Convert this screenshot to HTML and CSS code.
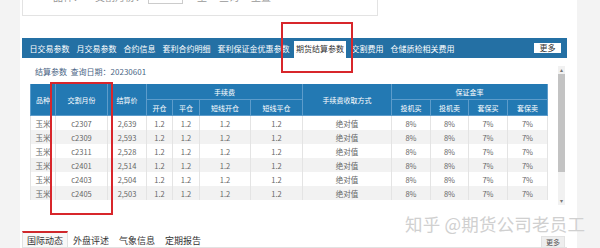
FILE: index.html
```html
<!DOCTYPE html>
<html lang="zh-CN">
<head>
    <meta charset="UTF-8">
    <title>期货结算参数</title>
    <link rel="stylesheet" href="styles.css">
</head>
<body>
    <div class="panel">
        <div class="filter">
            <div class="filter-row">
                <span class="f-label">品种：</span>
                <span class="f-label wide">交割月份：</span>
                <span class="f-input"></span>
                <span class="f-label short">至</span>
                <span class="f-label">查询</span>
                <span class="f-label">重置</span>
            </div>
        </div>

        <nav class="tabs">
            <a class="tab">日交易参数</a>
            <a class="tab">月交易参数</a>
            <a class="tab">合约信息</a>
            <a class="tab">套利合约明细</a>
            <a class="tab">套利保证金优惠参数</a>
            <a class="tab active">期货结算参数</a>
            <a class="tab">交割费用</a>
            <a class="tab">仓储质检相关费用</a>
            <span class="more">更多</span>
        </nav>

        <div class="scroll-area">
            <div class="scroll-content">
                <div class="caption">结算参数&nbsp;&nbsp;查询日期：20230601</div>
                <table class="params">
                    <colgroup>
                        <col style="width:25px"><col style="width:52px"><col style="width:39px">
                        <col style="width:26px"><col style="width:27px"><col style="width:51px"><col style="width:52px">
                        <col style="width:89px">
                        <col style="width:39px"><col style="width:38px"><col style="width:39px"><col style="width:40px">
                    </colgroup>
                    <thead>
                        <tr>
                            <th rowspan="2">品种</th>
                            <th rowspan="2">交割月份</th>
                            <th rowspan="2">结算价</th>
                            <th colspan="4">手续费</th>
                            <th rowspan="2">手续费收取方式</th>
                            <th colspan="4">保证金率</th>
                        </tr>
                        <tr>
                            <th>开仓</th><th>平仓</th><th>短线开仓</th><th>短线平仓</th>
                            <th>投机买</th><th>投机卖</th><th>套保买</th><th>套保卖</th>
                        </tr>
                    </thead>
                    <tbody id="rows"></tbody>
                </table>
            </div>
            <div class="scrollbar">
                <span class="arrow">&#9652;</span>
                <span class="thumb"></span>
                <span class="track"></span>
                <span class="arrow">&#9662;</span>
            </div>
        </div>

        <div class="news">
            <a class="news-tab active">国际动态</a>
            <a class="news-tab">外盘评述</a>
            <a class="news-tab">气象信息</a>
            <a class="news-tab">定期报告</a>
            <span class="news-more">更多</span>
        </div>
    </div>

    <div class="mark mark-tab"></div>
    <div class="mark mark-col"></div>
    <div class="watermark">知乎 @期货公司老员工</div>

    <script>
        const data = [
            ['c2307', '2,639'],
            ['c2309', '2,593'],
            ['c2311', '2,528'],
            ['c2401', '2,514'],
            ['c2403', '2,504'],
            ['c2405', '2,503']
        ];

        const tbody = document.getElementById('rows');
        data.forEach(([month, price]) => {
            const cells = ['玉米', month, price, '1.2', '1.2', '1.2', '1.2', '绝对值', '8%', '8%', '7%', '7%'];
            const tr = document.createElement('tr');
            tr.innerHTML = cells.map(c => `<td>${c}</td>`).join('');
            tbody.appendChild(tr);
        });
    </script>
</body>
</html>
```

FILE: styles.css
```css
body {
    margin: 0;
    height: 248px;
    overflow: hidden;
    background-color: #f3f3f3;
    font-family: "Noto Sans CJK SC", "Noto Sans", sans-serif;
    color: #333;
    position: relative;
}

a {
    text-decoration: none;
}

.panel {
    margin-left: 20px;
    width: 545px;
    height: 248px;
    padding: 0 10px 0 2px;
    background-color: #fff;
    display: flex;
    flex-direction: column;
}

/* search box, mostly scrolled out of view */
.filter {
    width: 354px;
    height: 15px;
    border: 1px solid #e3e3e3;
    border-top: none;
    overflow: hidden;
}

.filter-row {
    display: flex;
    align-items: flex-end;
    height: 15px;
    margin-top: -11px;
    padding-left: 30px;
    font-size: 10px;
    line-height: 15px;
    color: #999;
}

.f-label {
    margin-right: 12px;
}

.f-input {
    width: 33px;
    height: 13px;
    border: 1px solid #ccc;
    margin: 0 14px 0 -9px;
}

.tabs {
    margin-top: 22px;
    height: 20px;
    padding-left: 4px;
    background-color: #2470a4;
    display: flex;
    align-items: flex-end;
    flex-shrink: 0;
}

.tab {
    height: 17px;
    padding: 0 3.5px;
    font-size: 8px;
    line-height: 16px;
    color: #fff;
    white-space: nowrap;
}

.tab.active {
    background-color: #fff;
    color: #333;
    padding: 0 2px;
    margin: 0 2px 0 1px;
}

.more {
    margin: 0 6px 0 auto;
    align-self: center;
    height: 10px;
    padding: 0 5.5px;
    background-color: #fff;
    font-size: 8px;
    line-height: 10px;
    color: #333;
}

.scroll-area {
    margin-top: 6px;
    height: 141px;
    display: flex;
    flex-shrink: 0;
}

.scroll-content {
    flex: 1;
    overflow: hidden;
}

.caption {
    padding: 2px 0 0 13px;
    font-size: 8px;
    line-height: 12px;
    color: #4a6584;
}

.params {
    margin: 6px 0 0 8px;
    width: 517px;
    border-collapse: collapse;
    table-layout: fixed;
    font-size: 7.5px;
    color: #666;
}

.params th {
    height: 15px;
    padding: 0;
    background-color: #2379b3;
    color: #fff;
    font-weight: normal;
    font-size: 7px;
    border: 1px solid #5d9ccb;
    border-top: none;
}

.params td {
    height: 14px;
    padding: 0;
    text-align: center;
    white-space: nowrap;
    overflow: hidden;
    border-left: 1px solid #e4e4e4;
    border-right: 1px solid #e4e4e4;
}

.params tbody tr:nth-child(even) td {
    background-color: #f2f2f2;
}

.scrollbar {
    width: 7px;
    margin: 2px 2px 0 0;
    display: flex;
    flex-direction: column;
    align-items: center;
    background-color: #f1f1f1;
}

.arrow {
    height: 8px;
    font-size: 6px;
    line-height: 8px;
    color: #777;
}

.thumb {
    width: 7px;
    height: 98px;
    background-color: #c3c3c3;
}

.track {
    flex: 1;
}

.news {
    margin-top: 27px;
    height: 15px;
    display: flex;
    align-items: flex-end;
    border-bottom: 1px solid #e2e2e2;
}

.news-tab {
    height: 14px;
    padding: 0 5px;
    font-size: 9px;
    line-height: 15px;
    color: #333;
}

.news-tab.active {
    border-top: 2px solid #d0282c;
    border-left: 1px solid #e2e2e2;
    border-right: 1px solid #e2e2e2;
    background-color: #f8f8f8;
    padding: 0 4px;
}

.news-more {
    margin: 0 2px 0 auto;
    padding: 0 4px;
    height: 10px;
    background-color: #eee;
    border: 1px solid #e2e2e2;
    border-bottom: none;
    font-size: 7px;
    line-height: 10px;
    color: #555;
}

/* red annotation frames drawn over the screenshot */
.mark {
    position: absolute;
    border: 2px solid #d8262b;
    box-sizing: border-box;
}

.mark-tab {
    left: 281px;
    top: 22px;
    width: 72px;
    height: 51px;
}

.mark-col {
    left: 50px;
    top: 82px;
    width: 63px;
    height: 133px;
}

.watermark {
    position: absolute;
    left: 405px;
    top: 213px;
    font-size: 17.5px;
    line-height: 22px;
    color: #d0d0d0;
    white-space: nowrap;
    letter-spacing: 0.2px;
}
```
